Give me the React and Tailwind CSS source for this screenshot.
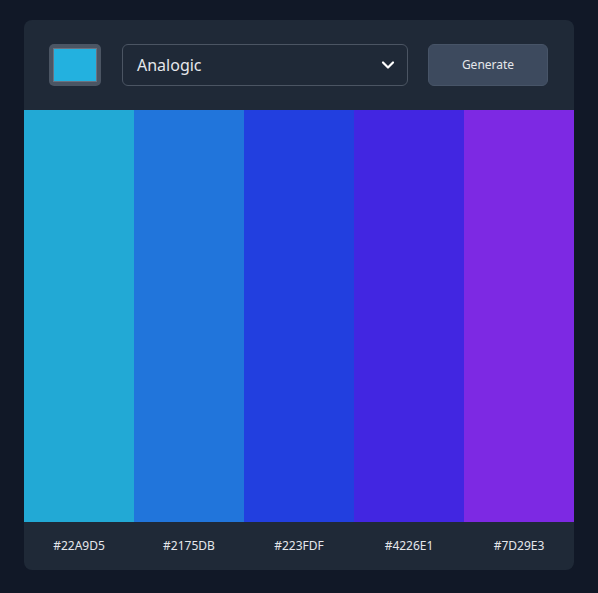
import React from "react";

const colors = ["#22A9D5", "#2175DB", "#223FDF", "#4226E1", "#7D29E3"];

export default function App() {
  return (
    <div className="min-h-[593px] w-full bg-[#111827] pt-5 px-6" style={{ fontFamily: '"Noto Sans", "Open Sans", sans-serif' }}>
      <div className="w-[550px] rounded-lg bg-[#1f2937] overflow-hidden">
        <div className="flex items-center h-[90px] px-[25px]">
          <div className="w-[52px] h-[42px] rounded-[5px] bg-[#4b5563] p-[4px]">
            <div className="w-full h-full border border-[#6b7280] bg-[#23b1df]" />
          </div>
          <div className="ml-[21px] w-[286px] h-[42px] rounded-md border border-[#4b5563] flex items-center justify-between pl-[14px] pr-[12px]">
            <span className="text-[16px] text-[#e5e7eb]">Analogic</span>
            <svg width="14" height="10" viewBox="0 0 14 10" fill="none">
              <path d="M2 2.5 L7 7.5 L12 2.5" stroke="white" strokeWidth="2.2" strokeLinecap="round" strokeLinejoin="round" />
            </svg>
          </div>
          <button className="ml-[20px] w-[120px] h-[42px] rounded-md bg-[#3d4a5e] text-[12px] text-[#e5e7eb] border border-[#475467]">
            Generate
          </button>
        </div>
        <div className="flex h-[412px]">
          {colors.map((c) => (
            <div key={c} className="flex-1" style={{ backgroundColor: c }} />
          ))}
        </div>
        <div className="flex h-[48px]">
          {colors.map((c) => (
            <div key={c} className="flex-1 flex items-center justify-center text-[12px] text-[#e5e7eb]">
              {c}
            </div>
          ))}
        </div>
      </div>
    </div>
  );
}
